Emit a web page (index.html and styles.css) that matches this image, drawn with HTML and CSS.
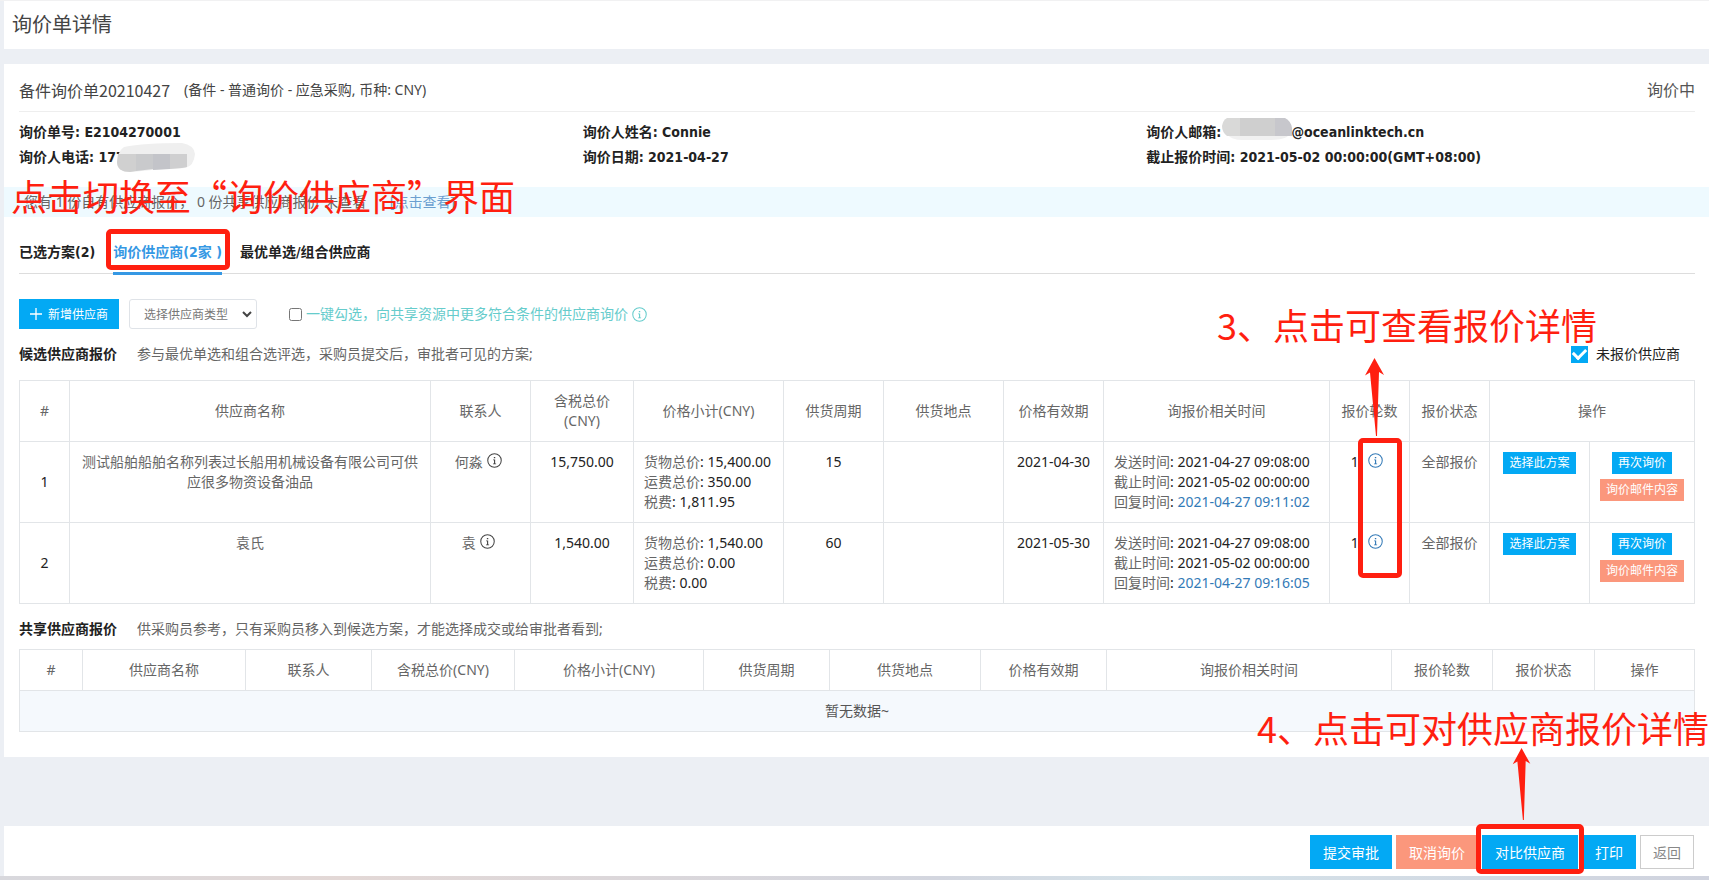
FILE: index.html
```html
<!DOCTYPE html>
<html lang="zh-CN">
<head>
<meta charset="utf-8">
<title>询价单详情</title>
<link rel="stylesheet" href="styles.css">
</head>
<body>
<svg class="defs" width="0" height="0" aria-hidden="true">
  <symbol id="info" viewBox="0 0 16 16">
    <circle cx="8" cy="8" r="7.200" fill="none" stroke="currentColor" stroke-width="1.100"/>
    <path d="M7.300 4.200h1.500v1.300H7.300zM6.500 6.900h2.200v4.300h1v.9H6.400v-.9h1.100V7.800h-1z" fill="currentColor"/>
  </symbol>
  <symbol id="arrow" viewBox="0 0 20 78">
    <path d="M9.500 0 19 17l-5-3-2 64h-1L5 14.500l-5 3z" fill="currentColor"/>
  </symbol>
</svg>
<div class="page">
  <header class="page-head"><h1>询价单详情</h1></header>

  <main class="panel">
    <div class="title-row">
      <h2>备件询价单20210427</h2>
      <span class="meta">(备件 - 普通询价 - 应急采购, 币种: CNY)</span>
      <span class="status">询价中</span>
    </div>

    <div class="facts">
      <div>询价单号: E2104270001</div>
      <div>询价人姓名: Connie</div>
      <div class="fact-line">询价人邮箱:<svg class="mask-mail" viewBox="0 0 72 24" aria-hidden="true"><path d="M6 17h62l-2 3q-6 3-18 3H22q-12 0-16-6z" fill="#f1f1f1"/><path d="M6 1h14v18H6Q1 15 1 9q1-6 5-8z" fill="#d9d9d8"/><path d="M19 1h36v18H19z" fill="#cfcfcf"/><path d="M54 1h10q6 3 7 10v8H54z" fill="#c7c7cc"/></svg>@oceanlinktech.cn</div>
      <div class="fact-line">询价人电话: 177<svg class="mask-phone" viewBox="0 0 80 30" aria-hidden="true"><path d="M8 5Q28 1 66 1q12 2 13 11-1 12-10 14Q40 27 16 30 2 30 1 21 1 10 8 5z" fill="#efefef"/><path d="M2 12h18v17l-6 1Q1 30 1 20z" fill="#d0d0d0"/><path d="M20 12h17v15l-17 2z" fill="#c9cacc"/><path d="M37 12h17v15l-17 1z" fill="#c3c4c9"/><path d="M54 12h17v13l-5 1-12 1z" fill="#cfcfd0"/></svg></div>
      <div>询价日期: 2021-04-27</div>
      <div>截止报价时间: 2021-05-02 00:00:00(GMT+08:00)</div>
    </div>

    <div class="notice">您有 1 份自有供应商报价， 0 份共享供应商报价 未查看 <a href="#view">[点击查看]</a>
      <span class="callout callout-tab">点击切换至“询价供应商”界面</span>
    </div>

    <nav class="tabs">
      <a href="#chosen">已选方案(2)</a>
      <a href="#suppliers" class="active">询价供应商(2家 )<span class="frame frame-tab"></span></a>
      <a href="#best">最优单选/组合供应商</a>
    </nav>

    <div class="toolbar">
      <button class="btn-add" type="button"><svg viewBox="0 0 12 12" width="12" height="12" aria-hidden="true"><path d="M6 0v12M0 6h12" stroke="currentColor" stroke-width="1.300"/></svg>新增供应商</button>
      <span class="select-wrap"><select aria-label="供应商类型"><option>选择供应商类型</option></select><svg viewBox="0 0 10 7" width="10" height="7" aria-hidden="true"><path d="M1 1l4 4 4-4" fill="none" stroke="#444" stroke-width="2"/></svg></span>
      <label class="pick-all"><input type="checkbox">一键勾选，向共享资源中更多符合条件的供应商询价<svg class="info"><use href="#info"/></svg></label>
    </div>

    <div class="section-head">
      <h3>候选供应商报价</h3><p>参与最优单选和组合选评选，采购员提交后，审批者可见的方案;</p>
      <label class="unquoted"><input type="checkbox" checked>未报价供应商</label>
      <span class="callout callout-detail">3、点击可查看报价详情</span>
    </div>

    <div class="table-box">
    <table class="quotes">
      <colgroup><col class="w50"><col><col class="w100"><col class="w103"><col class="w150"><col class="w100"><col class="w120"><col class="w100"><col class="w226"><col class="w80"><col class="w80"><col class="w100"><col class="w105"></colgroup>
      <thead><tr><th>#</th><th>供应商名称</th><th>联系人</th><th>含税总价<br>(CNY)</th><th>价格小计(CNY)</th><th>供货周期</th><th>供货地点</th><th>价格有效期</th><th>询报价相关时间</th><th>报价轮数</th><th>报价状态</th><th colspan="2">操作</th></tr></thead>
      <tbody>
        <tr>
          <td class="num">1</td><td class="soft">测试船舶船舶名称列表过长船用机械设备有限公司可供应很多物资设备油品</td>
          <td class="soft">何淼 <svg class="info"><use href="#info"/></svg></td><td>15,750.00</td>
          <td class="left"><span>货物总价</span>: 15,400.00<br><span>运费总价</span>: 350.00<br><span>税费</span>: 1,811.95</td>
          <td>15</td><td></td><td>2021-04-30</td>
          <td class="left"><span>发送时间</span>: 2021-04-27 09:08:00<br><span>截止时间</span>: 2021-05-02 00:00:00<br><span>回复时间</span>: <a href="#reply1">2021-04-27 09:11:02</a></td>
          <td><span class="round">1 <a href="#round1" aria-label="报价详情"><svg class="info"><use href="#info"/></svg></a></span></td>
          <td class="soft">全部报价</td>
          <td><button type="button" class="mini">选择此方案</button></td>
          <td><button type="button" class="mini">再次询价</button><button type="button" class="mini warn">询价邮件内容</button></td>
        </tr>
        <tr>
          <td class="num">2</td><td class="soft">袁氏</td>
          <td class="soft">袁 <svg class="info"><use href="#info"/></svg></td><td>1,540.00</td>
          <td class="left"><span>货物总价</span>: 1,540.00<br><span>运费总价</span>: 0.00<br><span>税费</span>: 0.00</td>
          <td>60</td><td></td><td>2021-05-30</td>
          <td class="left"><span>发送时间</span>: 2021-04-27 09:08:00<br><span>截止时间</span>: 2021-05-02 00:00:00<br><span>回复时间</span>: <a href="#reply2">2021-04-27 09:16:05</a></td>
          <td><span class="round">1 <a href="#round2" aria-label="报价详情"><svg class="info"><use href="#info"/></svg></a></span></td>
          <td class="soft">全部报价</td>
          <td><button type="button" class="mini">选择此方案</button></td>
          <td><button type="button" class="mini">再次询价</button><button type="button" class="mini warn">询价邮件内容</button></td>
        </tr>
      </tbody>
    </table>
    <svg class="arrow arrow-detail" aria-hidden="true"><use href="#arrow"/></svg>
    <span class="frame frame-detail"></span>
    </div>

    <div class="section-head shared">
      <h3>共享供应商报价</h3><p>供采购员参考，只有采购员移入到候选方案，才能选择成交或给审批者看到;</p>
    </div>

    <div class="table-box">
    <table class="quotes">
      <colgroup><col class="w63"><col><col class="w126"><col class="w143"><col class="w189"><col class="w126"><col class="w151"><col class="w126"><col class="w285"><col class="w101"><col class="w102"><col class="w100"></colgroup>
      <thead><tr><th>#</th><th>供应商名称</th><th>联系人</th><th>含税总价(CNY)</th><th>价格小计(CNY)</th><th>供货周期</th><th>供货地点</th><th>价格有效期</th><th>询报价相关时间</th><th>报价轮数</th><th>报价状态</th><th>操作</th></tr></thead>
      <tbody><tr><td colspan="12" class="empty">暂无数据~</td></tr></tbody>
    </table>
    <span class="callout callout-compare">4、点击可对供应商报价详情</span>
    </div>
  </main>

  <footer class="actions">
    <button type="button">提交审批</button>
    <button type="button" class="warn">取消询价</button>
    <span class="compare"><button type="button">对比供应商</button><span class="frame frame-compare"></span><svg class="arrow arrow-compare" aria-hidden="true"><use href="#arrow"/></svg></span>
    <button type="button">打印</button>
    <button type="button" class="plain">返回</button>
  </footer>
</div>
<div class="desktop-edge"></div>
</body>
</html>
```
FILE: styles.css
```css
* { box-sizing: border-box; }
body {
  margin: 0;
  min-height: 100vh;
  display: flex;
  flex-direction: column;
  background: #eceff4;
  color: #222;
  font: 14px/20px "Noto Sans", "Noto Sans CJK SC", sans-serif;
  overflow-x: hidden;
}
h1, h2, h3, p { margin: 0; font-weight: 400; }
a { color: #337ab7; text-decoration: none; }
button, select, input { font-family: inherit; margin: 0; }
.defs { position: absolute; }
.page {
  flex: 1;
  display: flex;
  flex-direction: column;
  padding-left: 4px;
  border-top: 1px solid #f1f1f2;
}
.page-head { background: #fff; padding: 8px; margin-bottom: 15px; }
.page-head h1 { font-size: 20px; line-height: 32px; color: #444; }
.panel { background: #fff; padding: 12px 14px 25px 15px; }

.title-row {
  display: flex;
  align-items: center;
  padding-bottom: 7px;
  border-bottom: 1px solid #eee;
}
.title-row h2 { font: 16px/28px "Noto Sans CJK SC", sans-serif; color: #444; }
.meta { margin-left: 14px; color: #444; }
.status { margin-left: auto; font-size: 16px; color: #555; }

.facts {
  display: grid;
  grid-template-columns: repeat(3, 1fr);
  gap: 5px 15px;
  padding: 10px 0 20px;
}
.facts, .tabs { font-weight: 700; font-family: "DejaVu Sans Condensed", "Noto Sans CJK SC", sans-serif; }
.fact-line { display: flex; align-items: center; }
.mask-mail { width: 72px; height: 24px; margin: -6px -2px 0 0; }
.mask-phone { width: 80px; height: 30px; margin: -5px 0 -5px -9px; }

.notice {
  position: relative;
  margin: 0 -14px 0 -15px;
  padding: 5px 20px;
  background: #eefaff;
  color: #666;
}
.notice a { margin-left: 20px; color: #6b9fd0; }

.tabs {
  display: flex;
  gap: 18px;
  margin-top: 24px;
  border-bottom: 1px solid #ddd;
}
.tabs a { position: relative; color: #222; padding-bottom: 9px; line-height: 22px; }
.tabs .active { color: #3598e4; border-bottom: 3px solid #3598e4; margin-bottom: -2px; }

.toolbar { display: flex; align-items: center; margin-top: 25px; }
.btn-add {
  display: flex;
  align-items: center;
  gap: 6px;
  height: 30px;
  padding: 0 11px;
  border: 0;
  background: #03a9f4;
  color: #fff;
  font-size: 12px;
}
.select-wrap { position: relative; margin-left: 10px; }
.select-wrap select {
  display: block;
  appearance: none;
  width: 128px;
  height: 30px;
  padding: 0 14px;
  border: 1px solid #dfe3e8;
  border-radius: 3px;
  background: #fff;
  color: #777;
  font-size: 12px;
}
.select-wrap svg { position: absolute; right: 5px; top: 12px; }
.pick-all { display: flex; align-items: center; margin-left: 32px; color: #66cccc; }
.pick-all input { width: 13px; height: 13px; margin-right: 4px; }
.pick-all .info { margin-left: 4px; }
.info { width: 15px; height: 15px; vertical-align: -1px; }

.section-head { position: relative; display: flex; align-items: center; margin: 15px 0 16px; }
.section-head h3 { font-size: 14px; font-weight: 700; margin-right: 20px; }
.section-head p { color: #666; }
.section-head.shared { margin: 15px 0 10px; }
.unquoted { display: flex; align-items: center; gap: 8px; margin-left: auto; margin-right: 15px; }
.unquoted input {
  appearance: none;
  width: 17px;
  height: 17px;
  background: #03a9f4;
  display: grid;
  place-items: center;
}
.unquoted input::before {
  content: "";
  width: 10px;
  height: 6px;
  margin-top: -3px;
  border: solid #fff;
  border-width: 0 0 3px 3px;
  transform: rotate(-45deg);
}

.table-box { position: relative; }
.quotes { width: 100%; table-layout: fixed; border-collapse: collapse; }
.quotes th, .quotes td {
  border: 1px solid #e2e5e8;
  padding: 10px;
  text-align: center;
  vertical-align: top;
  font-weight: 400;
}
.quotes th { vertical-align: middle; color: #666; padding: 10px 4px; }
.quotes .num { vertical-align: middle; }
.quotes .left { text-align: left; padding-right: 0; white-space: nowrap; }
.quotes .left span, .quotes .soft { color: #666; }
.quotes .soft .info { margin: 0 4px 0 1px; color: #444; }
.quotes .empty { background: #f5f9fd; color: #555; }
.round { white-space: pre; }
.round a { margin: 0 5px 0 6px; }
.w50 { width: 50px; } .w63 { width: 63px; } .w80 { width: 80px; }
.w100 { width: 100px; } .w101 { width: 101px; } .w102 { width: 102px; }
.w103 { width: 103px; } .w105 { width: 105px; } .w120 { width: 120px; }
.w126 { width: 126px; } .w143 { width: 143px; } .w150 { width: 150px; }
.w151 { width: 151px; } .w189 { width: 189px; } .w226 { width: 226px; }
.w285 { width: 285px; }

.mini {
  display: block;
  margin: 0 auto 5px;
  height: 22px;
  padding: 0 6px;
  border: 0;
  background: #03a9f4;
  color: #fff;
  font-size: 12px;
  line-height: 22px;
  white-space: nowrap;
}
.mini:last-child { margin-bottom: 0; }
.mini.warn, .actions .warn { background: #fb977c; }

.actions {
  display: flex;
  justify-content: flex-end;
  gap: 4px;
  margin-top: auto;
  padding: 9px 15px 7px;
  background: #fff;
}
.actions button {
  height: 34px;
  padding: 0 13px;
  border: 0;
  background: #03a9f4;
  color: #fff;
  font-size: 14px;
}
.actions .plain { border: 1px solid #ccc; padding: 0 12px; background: #fff; color: #888; }
.compare { position: relative; display: flex; }
.desktop-edge { height: 4px; background: linear-gradient(90deg, #d8d8dd, #e3d8d6 20%, #d3d6df 55%, #d5e3ea 68%, #d0d3de); }

/* Guide annotations drawn over the page */
.callout {
  position: absolute;
  z-index: 2;
  color: #ff1f10;
  font: 36px/40px "Noto Sans CJK SC", sans-serif;
  white-space: nowrap;
  pointer-events: none;
}
.callout-tab { left: 7px; top: -12px; }
.callout-detail { right: 98px; top: -40px; }
.callout-compare { right: -14px; top: 58px; }
.frame { position: absolute; z-index: 2; border: 5px solid #ff1f10; border-radius: 5px; pointer-events: none; }
.frame-tab { inset: -12px -8px 2px -7px; }
.frame-detail { right: 293px; top: 58px; width: 44px; height: 140px; }
.frame-compare { inset: -11px -6px -5px; }
.arrow { position: absolute; z-index: 2; width: 20px; color: #ff1f10; }
.arrow-detail { height: 78px; right: 310px; top: -22px; }
.arrow-compare { height: 72px; left: 30px; top: -87px; }
```
